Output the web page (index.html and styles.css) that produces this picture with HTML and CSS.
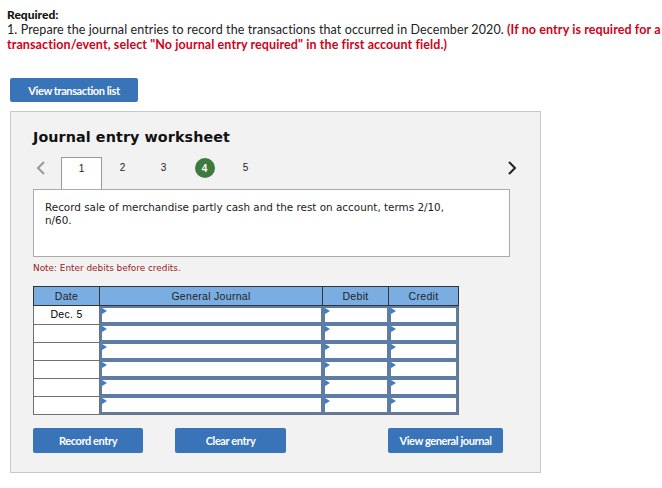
FILE: index.html
```
<!DOCTYPE html>
<html>
<head>
<meta charset="utf-8">
<link rel="stylesheet" href="styles.css">
</head>
<body>
<div class="req">
  <div class="req-title">Required:</div>
  <div class="req-text">1. Prepare the journal entries to record the transactions that occurred in December 2020. <span class="red">(If no entry is required for a</span></div>
  <div class="req-text"><span class="red">transaction/event, select "No journal entry required" in the first account field.)</span></div>
</div>
<button class="btn btn-list">View transaction list</button>
<div class="panel">
  <h2 class="ws-title">Journal entry worksheet</h2>
  <div class="tabs">
    <span class="chev chev-left"><svg width="10" height="14" viewBox="0 0 10 14"><path d="M8 1 L2 7 L8 13" fill="none" stroke="#999" stroke-width="2"/></svg></span>
    <span class="tab active">1</span>
    <span class="tab">2</span>
    <span class="tab">3</span>
    <span class="tab"><span class="dot">4</span></span>
    <span class="tab">5</span>
    <span class="spacer"></span>
    <span class="chev chev-right"><svg width="10" height="14" viewBox="0 0 10 14"><path d="M2 1 L8 7 L2 13" fill="none" stroke="#222" stroke-width="2"/></svg></span>
  </div>
  <div class="desc">Record sale of merchandise partly cash and the rest on account, terms 2/10,<br>n/60.</div>
  <div class="note">Note: Enter debits before credits.</div>
  <table class="jt">
    <thead>
      <tr><th class="c-date">Date</th><th class="c-gj">General Journal</th><th class="c-num">Debit</th><th class="c-num2">Credit</th></tr>
    </thead>
    <tbody>
      <tr><td class="date">Dec. 5</td><td class="in"><div class="box"></div></td><td class="in"><div class="box"></div></td><td class="in"><div class="box"></div></td></tr>
      <tr><td class="date"></td><td class="in"><div class="box"></div></td><td class="in"><div class="box"></div></td><td class="in"><div class="box"></div></td></tr>
      <tr><td class="date"></td><td class="in"><div class="box"></div></td><td class="in"><div class="box"></div></td><td class="in"><div class="box"></div></td></tr>
      <tr><td class="date"></td><td class="in"><div class="box"></div></td><td class="in"><div class="box"></div></td><td class="in"><div class="box"></div></td></tr>
      <tr><td class="date"></td><td class="in"><div class="box"></div></td><td class="in"><div class="box"></div></td><td class="in"><div class="box"></div></td></tr>
      <tr><td class="date"></td><td class="in"><div class="box"></div></td><td class="in"><div class="box"></div></td><td class="in"><div class="box"></div></td></tr>
    </tbody>
  </table>
  <div class="actions">
    <button class="btn btn-rec">Record entry</button>
    <button class="btn btn-clear">Clear entry</button>
    <span class="spacer"></span>
    <button class="btn btn-view">View general journal</button>
  </div>
</div>
</body>
</html>
```
FILE: styles.css
```
html, body { margin: 0; padding: 0; background: #fff; overflow: hidden; }
body { padding: 7px 0 0 7px; font-family: "Lato", "Liberation Sans", sans-serif; }
.req { width: 720px; font-size: 12.5px; line-height: 15px; color: #222; }
.req-text { white-space: nowrap; letter-spacing: 0.1px; }
.req-title { font-weight: 900; font-size: 12px; color: #111; }
.red { color: #d0021b; font-weight: bold; }
.btn {
  display: inline-flex; align-items: center; justify-content: center;
  background: #3a74b8; color: #fff; border: 0; border-radius: 2px;
  font-family: "Lato", "Liberation Sans", sans-serif; font-weight: bold; font-size: 11px;
  letter-spacing: -0.4px; height: 24px; padding: 0; cursor: pointer;
}
.btn-list { margin: 26px 0 0 3px; width: 128px; display: flex; }
.panel {
  margin: 9px 0 0 3px; width: 531px; height: 362px; box-sizing: border-box;
  background: #f2f2f2; border: 1px solid #c8c8c8; padding: 0 0 0 22px;
}
.ws-title { margin: 16px 0 0 0; font-family: "DejaVu Sans", Verdana, sans-serif; font-size: 14.3px; font-weight: bold; color: #111; line-height: 18px; letter-spacing: 0.1px; }
.tabs { display: flex; align-items: stretch; height: 32px; margin-top: 11px; width: 484px; }
.chev { display: flex; align-items: center; }
.chev-left { width: 28px; padding-left: 3px; box-sizing: border-box; align-items: flex-start; padding-top: 4px; }
.chev-right { align-items: flex-start; padding-top: 4px; }
.tab {
  width: 41px; box-sizing: border-box; display: flex; align-items: flex-start; justify-content: center;
  padding-top: 5px; font-family: "Liberation Sans", Arial, sans-serif; font-size: 10px; color: #222;
}
.tab.active { background: #fff; border: 1px solid #999; border-bottom: 0; }
.dot { width: 20px; height: 20px; border-radius: 50%; background: #3e7a3c; color: #fff; font-weight: bold; display: flex; align-items: center; justify-content: center; margin-top: -4px; }
.spacer { flex: 1; }
.desc {
  background: #fff; border: 1px solid #aaa; height: 68px; box-sizing: border-box;
  padding: 11px 11px; font-family: "DejaVu Sans", Verdana, sans-serif; font-size: 10.4px; line-height: 13px; color: #222;
  width: 477px;
}
.note { font-family: "DejaVu Sans", Verdana, sans-serif; font-size: 8.9px; color: #9b1b1b; margin-top: 5px; line-height: 12px; }
.jt { margin-top: 12px; border-collapse: collapse; font-family: "Liberation Sans", Arial, sans-serif; font-size: 10.5px; letter-spacing: 0.3px; background: #fff; border: 1px solid #707070; }
.jt th { background: #7aaee3; color: #222; font-weight: normal; height: 18px; padding: 0; border: 1px solid #333; line-height: 12px; }
.c-date { width: 65px; }
.c-gj { width: 222px; }
.c-num { width: 65px; }
.c-num2 { width: 69px; }
.jt td { padding: 0; border: 1px solid #707070; }
.jt td.date { text-align: center; vertical-align: top; padding-top: 2px; height: 15px; line-height: 12px; }
.jt td.in { border: 0; padding: 0; }
.box { position: relative; height: 14px; background: #fff; border: 2px solid #5e7da6; }
.box::before { content: ""; position: absolute; left: 0; top: 0; border-left: 5px solid #3c7cd0; border-top: 3px solid transparent; border-bottom: 3px solid transparent; }
.actions { display: flex; margin-top: 13px; width: 470px; }
.btn-rec { width: 110px; height: 25px; }
.btn-clear { width: 111px; height: 25px; margin-left: 32px; }
.btn-view { width: 115px; height: 25px; }
```
